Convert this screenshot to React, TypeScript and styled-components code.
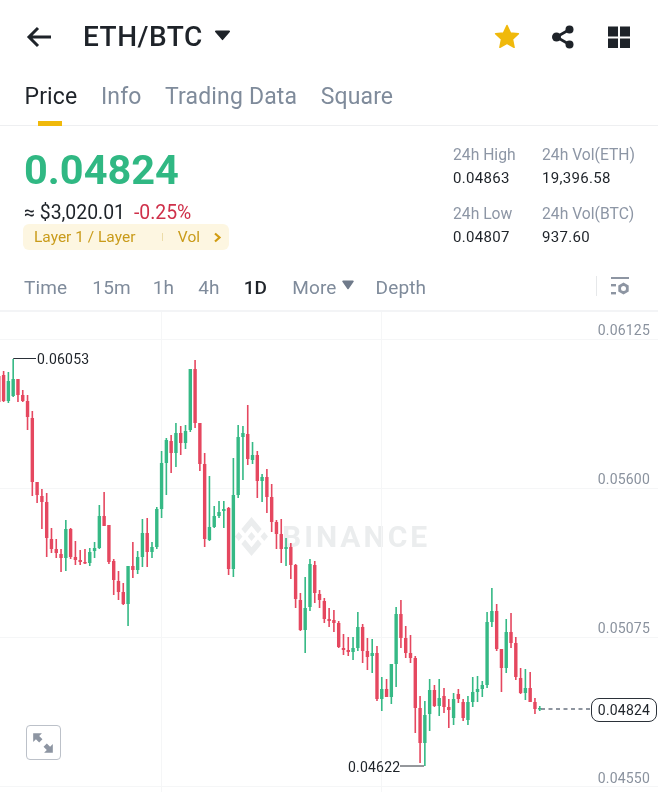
import React from "react";
import styled, { createGlobalStyle } from "styled-components";

const Global = createGlobalStyle`
  html, body { margin: 0; padding: 0; background: #fff; }
  body { font-family: Roboto, "Liberation Sans", sans-serif; color: #1e2329; overflow: hidden; }
`;

const Page = styled.div`
  width: 658px;
  height: 792px;
  display: flex;
  flex-direction: column;
  background: #fff;
  overflow: hidden;
  filter: blur(0.45px);
`;

const Header = styled.header`
  height: 73px;
  display: flex;
  align-items: center;
  padding: 0 26px 0 26px;
  box-sizing: border-box;
`;
const BackIcon = styled.svg`
  width: 27px;
  height: 22px;
  margin-right: 30px;
`;
const Title = styled.h1`
  margin: 0;
  font-size: 28px;
  line-height: 34px;
  font-weight: 500;
  letter-spacing: 0.5px;
  color: #1e2329;
`;
const TitleCaret = styled.svg`
  width: 15px;
  height: 12px;
  margin: -3px 0 0 12px;
`;
const HeaderActions = styled.div`
  margin-left: auto;
  display: flex;
  align-items: center;
  gap: 30px;
`;
const ActionIcon = styled.svg`
  width: 26px;
  height: 26px;
  display: block;
`;

const Tabs = styled.nav`
  height: 53px;
  display: flex;
  padding-left: 24.5px;
  gap: 23.5px;
  border-bottom: 1px solid #eeeff1;
  box-sizing: border-box;
`;
const Tab = styled.div<{ $active?: boolean }>`
  position: relative;
  font-size: 23px;
  letter-spacing: 0.15px;
  line-height: 48px;
  color: ${(p) => (p.$active ? "#1e2329" : "#7f8b9b")};
  ${(p) =>
    p.$active
      ? `&::after { content: ""; position: absolute; left: 13.5px; width: 24px; bottom: -1px; height: 5px; background: #f0b90b; }`
      : ""}
`;

const Summary = styled.section`
  height: 136px;
  display: flex;
  justify-content: space-between;
  box-sizing: border-box;
`;
const PriceColumn = styled.div`
  padding: 20px 0 0 24px;
  display: flex;
  flex-direction: column;
  align-items: flex-start;
`;
const LastPrice = styled.div`
  font-size: 41.500px;
  line-height: 48px;
  font-weight: 700;
  color: #30b883;
`;
const FiatRow = styled.div`
  margin-top: 8px;
  display: flex;
  gap: 9px;
  font-size: 19.400px;
  line-height: 22px;
`;
const Change = styled.span`
  color: #cf304a;
`;
const TagBar = styled.div`
  width: 206px;
  height: 26px;
  margin-left: -1px;
  padding: 0 7px 0 11px;
  box-sizing: border-box;
  display: flex;
  align-items: center;
  border-radius: 6px;
  background: #fdf6e1;
  color: #c99b1a;
  font-size: 15.500px;
`;
const TagTick = styled.span`
  width: 1px;
  height: 8px;
  background: #ecdca8;
  margin: 0 15px 0 auto;
`;
const TagChevron = styled.svg`
  width: 9px;
  height: 11px;
  margin-left: 13px;
`;
const Stats = styled.div`
  display: grid;
  grid-template-columns: 89px 116px;
  grid-auto-rows: 59px;
  padding-top: 18px;
`;
const Stat = styled.div`
  display: flex;
  flex-direction: column;
  gap: 3.500px;
`;
const StatLabel = styled.span`
  font-size: 15.700px;
  line-height: 21px;
  color: #8d96a5;
`;
const StatValue = styled.span`
  font-size: 15px;
  line-height: 19px;
  letter-spacing: 0.3px;
  color: #1e2329;
`;

const Intervals = styled.div`
  height: 50px;
  display: flex;
  align-items: center;
  padding: 3px 28px 0 24px;
  border-bottom: 2px solid #f3f4f6;
  box-sizing: border-box;
`;
const Interval = styled.span<{ $active?: boolean; $gap: number }>`
  font-size: 19px;
  letter-spacing: 0.15px;
  font-weight: ${(p) => (p.$active ? 500 : 400)};
  color: ${(p) => (p.$active ? "#1e2329" : "#7f8b9b")};
  margin-right: ${(p) => p.$gap}px;
`;
const MoreCaret = styled.svg`
  width: 12px;
  height: 10px;
  margin: -5px 22px 0 -19px;
`;
const IntervalTools = styled.div`
  margin: -3px 0 0 auto;
  display: flex;
  align-items: center;
  gap: 13px;
`;
const ToolDivider = styled.span`
  width: 1px;
  height: 20px;
  background: #e6e8ea;
`;
const ToolIcon = styled.svg`
  width: 20px;
  height: 20px;
`;

const Chart = styled.section`
  position: relative;
  flex: 1;
  overflow: hidden;
`;
const ChartCanvas = styled.svg`
  position: absolute;
  inset: 0;
  width: 658px;
  height: 480px;
`;
const Watermark = styled.div`
  position: absolute;
  left: 235px;
  top: 205px;
  display: flex;
  align-items: center;
  gap: 14px;
`;
const WatermarkText = styled.span`
  font-size: 30px;
  font-weight: 700;
  letter-spacing: 3px;
  color: #ebedee;
`;
const AxisLabel = styled.span<{ $top: number }>`
  position: absolute;
  right: 8px;
  top: ${(p) => p.$top}px;
  font-size: 14px;
  line-height: 18px;
  color: #8a929e;
  letter-spacing: 0.2px;
`;
const PriceNote = styled.span<{ $left: number; $top: number }>`
  position: absolute;
  left: ${(p) => p.$left}px;
  top: ${(p) => p.$top}px;
  font-size: 14px;
  line-height: 18px;
  letter-spacing: 0.2px;
  color: #1e2329;
`;
const CurrentPrice = styled.span`
  position: absolute;
  left: 591px;
  top: 386px;
  width: 66px;
  height: 24px;
  box-sizing: border-box;
  border: 1px solid #2b3139;
  border-radius: 8px;
  background: #fff;
  display: flex;
  align-items: center;
  justify-content: center;
  font-size: 14px;
  letter-spacing: 0.2px;
`;
const ExpandButton = styled.button`
  position: absolute;
  left: 25.500px;
  top: 413px;
  width: 35px;
  height: 35px;
  padding: 0;
  box-sizing: border-box;
  background: #fff;
  border: 1.500px solid #bcc1c9;
  border-radius: 4px;
  display: flex;
  align-items: center;
  justify-content: center;
`;
const ExpandIcon = styled.svg`
  width: 24px;
  height: 24px;
`;

type Candle = ["g" | "r", number, number, number, number];
const candles: Candle[] = [
  ["r", 375, 403, 376, 402],
  ["r", 371, 402, 375, 401],
  ["g", 372, 403, 381, 401],
  ["g", 359, 397, 379, 396],
  ["r", 379, 402, 379, 395],
  ["r", 390, 402, 395, 401],
  ["r", 395, 430, 401, 417],
  ["r", 411, 496, 418, 482],
  ["r", 482, 503, 482, 495],
  ["r", 489, 529, 496, 502],
  ["r", 493, 557, 502, 538],
  ["r", 528, 553, 539, 549],
  ["r", 539, 558, 549, 553],
  ["r", 549, 572, 554, 558],
  ["g", 520, 571, 529, 558],
  ["r", 528, 559, 529, 557],
  ["r", 541, 565, 557, 560],
  ["r", 550, 565, 560, 562],
  ["r", 549, 564, 562, 563],
  ["g", 548, 566, 552, 563],
  ["g", 542, 558, 548, 551],
  ["g", 505, 549, 516, 548],
  ["r", 492, 526, 516, 526],
  ["r", 525, 564, 525, 562],
  ["r", 559, 595, 561, 580],
  ["r", 571, 600, 581, 592],
  ["r", 583, 605, 592, 604],
  ["g", 566, 626, 566, 604],
  ["r", 542, 578, 566, 570],
  ["g", 551, 574, 557, 570],
  ["g", 519, 567, 533, 557],
  ["r", 518, 567, 533, 552],
  ["g", 542, 558, 547, 552],
  ["g", 507, 549, 509, 547],
  ["g", 451, 518, 463, 509],
  ["g", 438, 495, 440, 463],
  ["r", 435, 473, 441, 453],
  ["g", 423, 467, 433, 453],
  ["r", 426, 455, 433, 443],
  ["g", 425, 449, 431, 443],
  ["g", 369, 432, 369, 430],
  ["r", 360, 428, 369, 423],
  ["r", 423, 471, 423, 464],
  ["r", 453, 547, 464, 539],
  ["g", 476, 541, 527, 540],
  ["g", 506, 528, 516, 527],
  ["g", 501, 518, 512, 516],
  ["g", 501, 528, 509, 511],
  ["r", 507, 575, 508, 569],
  ["g", 458, 577, 495, 569],
  ["g", 425, 498, 437, 495],
  ["g", 426, 480, 433, 437],
  ["r", 405, 465, 434, 459],
  ["g", 442, 464, 455, 460],
  ["r", 451, 498, 455, 481],
  ["g", 474, 502, 477, 481],
  ["r", 469, 513, 477, 497],
  ["r", 484, 532, 497, 522],
  ["r", 520, 549, 522, 534],
  ["r", 519, 563, 534, 549],
  ["g", 538, 566, 547, 549],
  ["r", 543, 579, 547, 565],
  ["r", 564, 608, 565, 599],
  ["r", 593, 631, 600, 630],
  ["g", 577, 653, 608, 630],
  ["g", 559, 611, 564, 607],
  ["r", 561, 603, 565, 593],
  ["r", 590, 608, 594, 600],
  ["r", 598, 623, 601, 619],
  ["r", 608, 627, 619, 621],
  ["r", 610, 632, 620, 623],
  ["r", 621, 648, 623, 647],
  ["r", 634, 655, 648, 650],
  ["r", 637, 656, 650, 652],
  ["g", 637, 660, 648, 652],
  ["g", 612, 651, 627, 648],
  ["r", 624, 663, 627, 651],
  ["r", 638, 670, 651, 657],
  ["g", 639, 673, 653, 656],
  ["r", 646, 701, 653, 699],
  ["g", 677, 711, 689, 699],
  ["r", 679, 697, 689, 697],
  ["g", 664, 704, 664, 697],
  ["g", 607, 687, 614, 664],
  ["r", 600, 648, 614, 638],
  ["r", 626, 658, 638, 653],
  ["r", 635, 663, 653, 658],
  ["r", 656, 733, 658, 708],
  ["r", 696, 763, 708, 743],
  ["g", 701, 766, 715, 743],
  ["g", 679, 731, 690, 714],
  ["r", 685, 707, 690, 706],
  ["g", 679, 716, 698, 706],
  ["r", 688, 713, 696, 707],
  ["r", 699, 728, 707, 710],
  ["g", 693, 725, 699, 718],
  ["r", 689, 703, 694, 699],
  ["r", 699, 721, 702, 718],
  ["g", 696, 725, 702, 720],
  ["g", 677, 707, 692, 702],
  ["g", 676, 702, 689, 692],
  ["g", 681, 697, 685, 689],
  ["g", 612, 688, 622, 685],
  ["g", 588, 627, 611, 622],
  ["r", 604, 651, 611, 649],
  ["r", 649, 692, 649, 668],
  ["g", 619, 673, 632, 668],
  ["r", 613, 648, 632, 643],
  ["r", 637, 680, 643, 677],
  ["r", 668, 694, 678, 693],
  ["g", 669, 700, 688, 693],
  ["r", 672, 702, 688, 702],
  ["r", 698, 714, 702, 709],
  ["g", 706, 711, 708, 709.5],
];

const candleColor = { g: "#35b985", r: "#e5475f" };

export default function App() {
  return (
    <Page>
      <Global />
      <Header>
        <BackIcon viewBox="0 0 27 22" fill="none" stroke="#1e2329" strokeWidth="3">
          <path d="M25 11H3M12 2l-9 9 9 9" />
        </BackIcon>
        <Title>ETH/BTC</Title>
        <TitleCaret viewBox="0 0 15 12">
          <path d="M1 1.500h13a1 1 0 0 1 .8 1.500L8.300 10.600a1 1 0 0 1-1.600 0L.2 3A1 1 0 0 1 1 1.500z" fill="#1e2329" />
        </TitleCaret>
        <HeaderActions>
          <ActionIcon viewBox="0 0 26 26">
            <path
              d="M13 1.500l3.400 7.400 8 .9-5.900 5.500 1.600 8-7.100-4-7.100 4 1.600-8L1.600 9.800l8-.9z"
              fill="#f0b90b"
              stroke="#f0b90b"
              strokeWidth="1.500"
              strokeLinejoin="round"
            />
          </ActionIcon>
          <ActionIcon viewBox="0 0 26 26">
            <g fill="#1e2329">
              <circle cx="6.500" cy="13" r="4.500" />
              <circle cx="19.500" cy="5.500" r="4" />
              <circle cx="19.500" cy="20.500" r="4" />
            </g>
            <path d="M6.500 13l13-7.500M6.500 13l13 7.500" stroke="#1e2329" strokeWidth="2.600" />
          </ActionIcon>
          <ActionIcon viewBox="0 0 26 26">
            <path d="M2 2.500h10v10H2zM14 2.500h10v10H14zM2 14.500h10v9.500H2zM14 14.500h10v9.500H14z" fill="#1e2329" />
          </ActionIcon>
        </HeaderActions>
      </Header>

      <Tabs>
        <Tab $active>Price</Tab>
        <Tab>Info</Tab>
        <Tab>Trading Data</Tab>
        <Tab>Square</Tab>
      </Tabs>

      <Summary>
        <PriceColumn>
          <LastPrice>0.04824</LastPrice>
          <FiatRow>
            <span>≈ $3,020.01</span>
            <Change>-0.25%</Change>
          </FiatRow>
          <TagBar>
            <span>Layer 1 / Layer</span>
            <TagTick />
            <span>Vol</span>
            <TagChevron viewBox="0 0 9 11" fill="none" stroke="#d19c12" strokeWidth="2.200">
              <path d="M2 1.500l4.500 4-4.500 4" />
            </TagChevron>
          </TagBar>
        </PriceColumn>
        <Stats>
          <Stat>
            <StatLabel>24h High</StatLabel>
            <StatValue>0.04863</StatValue>
          </Stat>
          <Stat>
            <StatLabel>24h Vol(ETH)</StatLabel>
            <StatValue>19,396.58</StatValue>
          </Stat>
          <Stat>
            <StatLabel>24h Low</StatLabel>
            <StatValue>0.04807</StatValue>
          </Stat>
          <Stat>
            <StatLabel>24h Vol(BTC)</StatLabel>
            <StatValue>937.60</StatValue>
          </Stat>
        </Stats>
      </Summary>

      <Intervals>
        <Interval $gap={25}>Time</Interval>
        <Interval $gap={22}>15m</Interval>
        <Interval $gap={24}>1h</Interval>
        <Interval $gap={24}>4h</Interval>
        <Interval $gap={25} $active>1D</Interval>
        <Interval $gap={24}>More</Interval>
        <MoreCaret viewBox="0 0 12 10">
          <path d="M1 .5h10a.8.8 0 0 1 .6 1.300L6.600 9a.8.8 0 0 1-1.200 0L.4 1.800A.8.8 0 0 1 1 .5z" fill="#6f7a8a" />
        </MoreCaret>
        <Interval $gap={0}>Depth</Interval>
        <IntervalTools>
          <ToolDivider />
          <ToolIcon viewBox="0 0 20 20">
            <g fill="#8d95a2">
              <rect x="1" y="1" width="18" height="2" />
              <rect x="1" y="8" width="5" height="2.400" />
              <rect x="1" y="16" width="5" height="2.400" />
              <path
                fillRule="evenodd"
                d="M13.500 6.500l5.200 3v6l-5.200 3-5.200-3v-6zM13.500 10a2.500 2.500 0 1 0 0 5 2.500 2.500 0 0 0 0-5z"
              />
            </g>
          </ToolIcon>
        </IntervalTools>
      </Intervals>

      <Chart>
        <Watermark>
          <svg width="33" height="39" viewBox="0 0 126.61 126.61" preserveAspectRatio="none">
            <path
              fill="#ebedee"
              d="m38.730 53.200 24.590-24.580 24.600 24.600 14.300-14.310L63.320 0 24.430 38.900zM0 63.310l14.300-14.310 14.310 14.310-14.310 14.300zM38.730 73.410l24.590 24.590 24.600-24.600 14.310 14.290-38.900 38.910-38.910-38.880-.02-.02zM98 63.310l14.300-14.310 14.310 14.300-14.310 14.320zM77.830 63.300 63.320 48.780 52.590 59.510l-1.240 1.230-2.540 2.540 14.510 14.500 14.510-14.510z"
            />
          </svg>
          <WatermarkText>BINANCE</WatermarkText>
        </Watermark>
        <ChartCanvas viewBox="0 312 658 480">
          <g stroke="#f5f6f7" strokeWidth="1">
            <path d="M0 339.500H658M0 488.500H658M0 637.500H658M0 786.500H658" />
            <path d="M161.500 312V792M381.500 312V792" />
          </g>
          {candles.map(([c, wt, wb, bt, bb], i) => {
            const x = 3.6 + 4.787 * (i - 1);
            return (
              <g key={i} fill={candleColor[c]}>
                <rect x={x - 0.8} y={wt} width={1.6} height={wb - wt} />
                <rect x={x - 1.7} y={bt} width={3.4} height={Math.max(bb - bt, 1.5)} />
              </g>
            );
          })}
          <path d="M13.500 359V358.500H36" fill="none" stroke="#2b3139" strokeWidth="1" />
          <path d="M400 766H424" fill="none" stroke="#2b3139" strokeWidth="1" />
          <path d="M541 709H590" fill="none" stroke="#6a7380" strokeWidth="1.400" strokeDasharray="4 3.500" />
        </ChartCanvas>
        <AxisLabel $top={9}>0.06125</AxisLabel>
        <AxisLabel $top={158}>0.05600</AxisLabel>
        <AxisLabel $top={307}>0.05075</AxisLabel>
        <AxisLabel $top={457}>0.04550</AxisLabel>
        <PriceNote $left={37} $top={38}>0.06053</PriceNote>
        <PriceNote $left={348} $top={446}>0.04622</PriceNote>
        <CurrentPrice>0.04824</CurrentPrice>
        <ExpandButton aria-label="Expand">
          <ExpandIcon viewBox="0 0 22 22">
            <path
              d="M2 2h8L7.500 4.500l3 3-3 3-3-3L2 10zM20 20h-8l2.500-2.500-3-3 3-3 3 3L20 12z"
              fill="#8d95a2"
            />
          </ExpandIcon>
        </ExpandButton>
      </Chart>
    </Page>
  );
}
